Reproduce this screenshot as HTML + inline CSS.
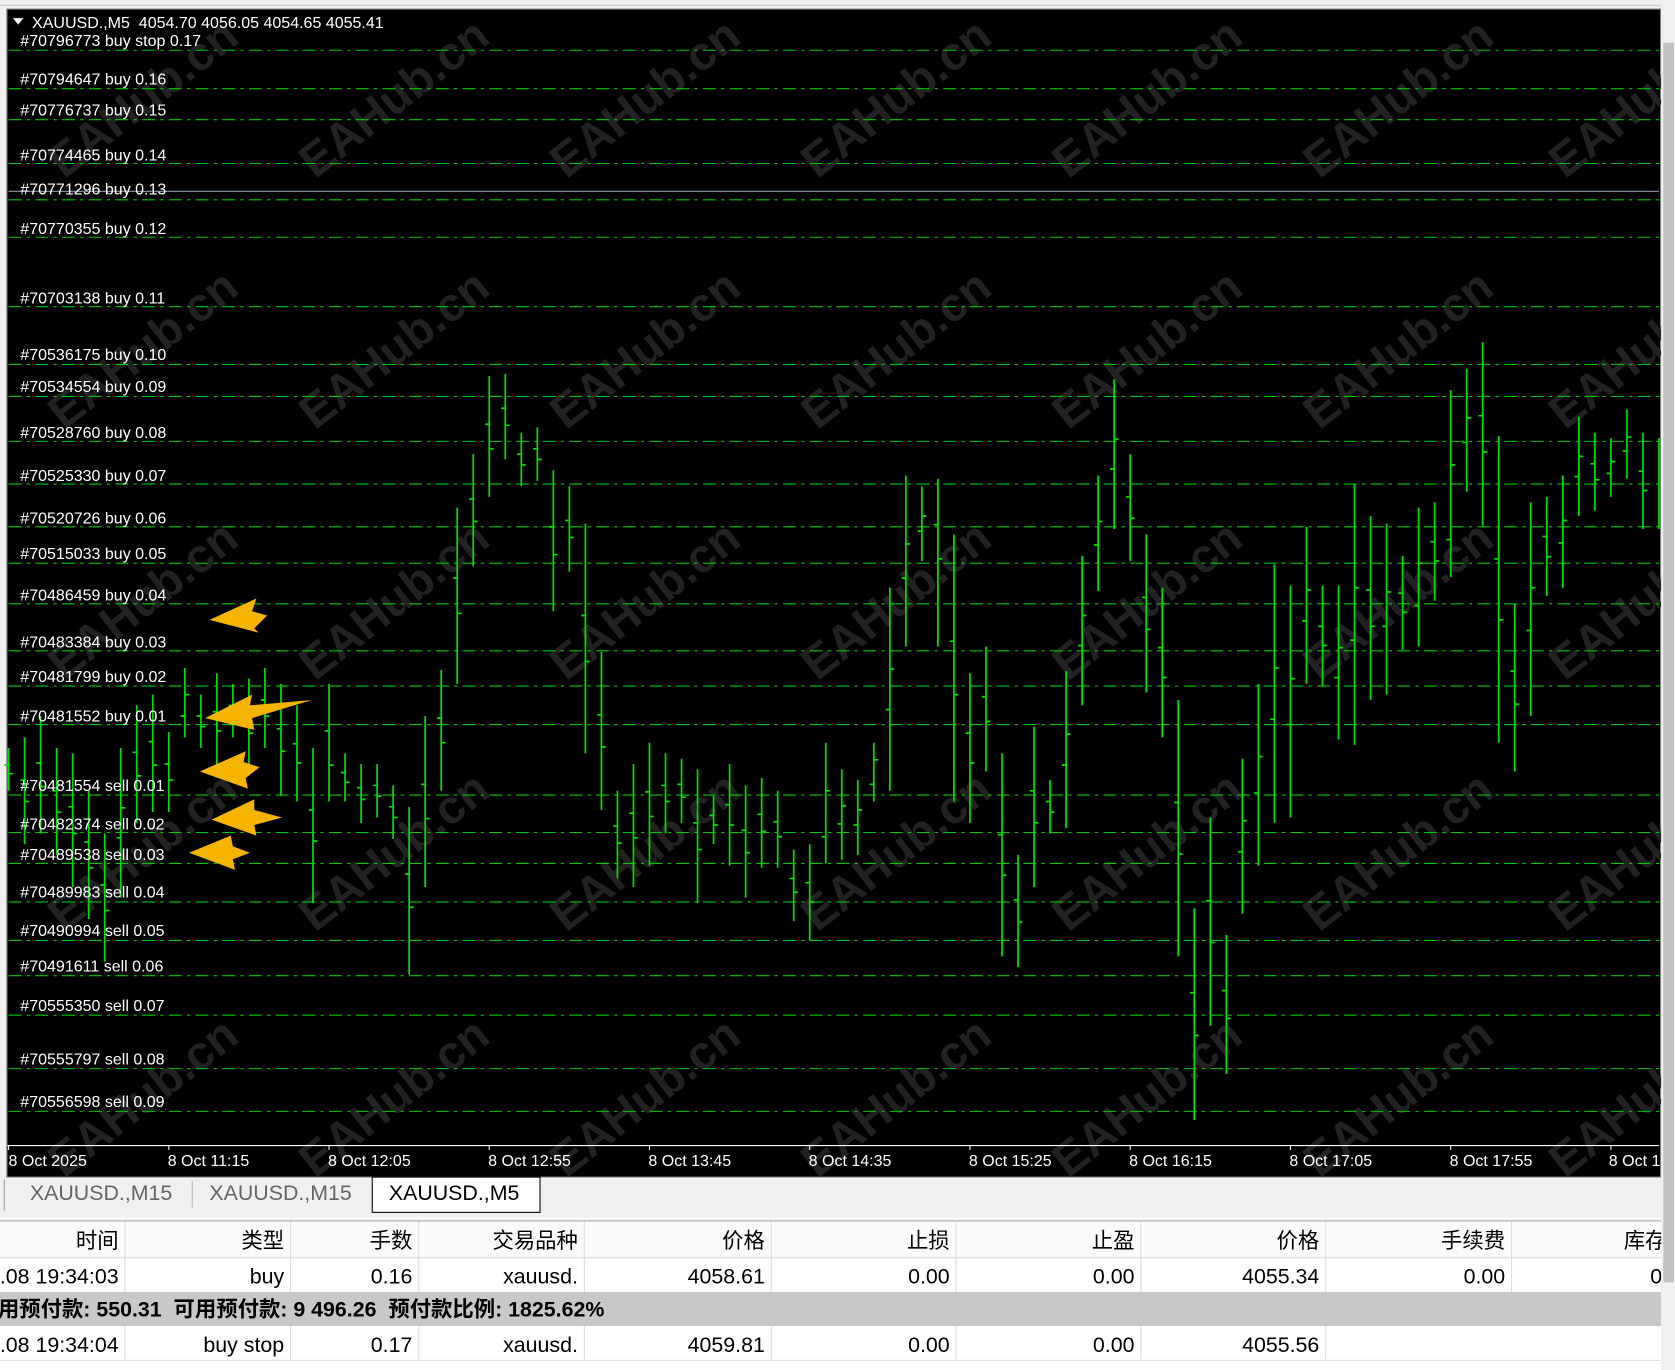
<!DOCTYPE html>
<html><head><meta charset="utf-8"><style>
html,body{margin:0;padding:0;background:#f0f0f0;width:1675px;height:1370px;overflow:hidden}
svg{display:block}
.l{font-family:"Liberation Sans",sans-serif;font-size:15px;fill:#fff}
.a{font-family:"Liberation Sans",sans-serif;font-size:15px;fill:#fff}
.t{font-family:"Liberation Sans","Noto Sans CJK SC",sans-serif;font-size:20px;fill:#000}
.wm{font-family:"Liberation Sans",sans-serif;font-size:44px;font-weight:bold;fill:#222}
</style></head><body>
<svg width="1675" height="1370" viewBox="0 0 1568 1282" preserveAspectRatio="none" xmlns="http://www.w3.org/2000/svg">
<rect x="0" y="0" width="1568" height="1282" fill="#f0f0f0"/>
<line x1="0" y1="5" x2="1555" y2="5" stroke="#c8c8c8"/>
<rect x="6" y="8" width="1549" height="1094" fill="#000"/>
<rect x="6.5" y="8.5" width="1548" height="1093" fill="none" stroke="#888"/>
<!-- watermarks -->
<g transform="translate(0,8)">
<text class="wm" transform="translate(60,160) rotate(-38)">EAHub.cn</text>
<text class="wm" transform="translate(295,160) rotate(-38)">EAHub.cn</text>
<text class="wm" transform="translate(530,160) rotate(-38)">EAHub.cn</text>
<text class="wm" transform="translate(765,160) rotate(-38)">EAHub.cn</text>
<text class="wm" transform="translate(1000,160) rotate(-38)">EAHub.cn</text>
<text class="wm" transform="translate(1235,160) rotate(-38)">EAHub.cn</text>
<text class="wm" transform="translate(1465,160) rotate(-38)">EAHub.cn</text>
<text class="wm" transform="translate(60,395) rotate(-38)">EAHub.cn</text>
<text class="wm" transform="translate(295,395) rotate(-38)">EAHub.cn</text>
<text class="wm" transform="translate(530,395) rotate(-38)">EAHub.cn</text>
<text class="wm" transform="translate(765,395) rotate(-38)">EAHub.cn</text>
<text class="wm" transform="translate(1000,395) rotate(-38)">EAHub.cn</text>
<text class="wm" transform="translate(1235,395) rotate(-38)">EAHub.cn</text>
<text class="wm" transform="translate(1465,395) rotate(-38)">EAHub.cn</text>
<text class="wm" transform="translate(60,630) rotate(-38)">EAHub.cn</text>
<text class="wm" transform="translate(295,630) rotate(-38)">EAHub.cn</text>
<text class="wm" transform="translate(530,630) rotate(-38)">EAHub.cn</text>
<text class="wm" transform="translate(765,630) rotate(-38)">EAHub.cn</text>
<text class="wm" transform="translate(1000,630) rotate(-38)">EAHub.cn</text>
<text class="wm" transform="translate(1235,630) rotate(-38)">EAHub.cn</text>
<text class="wm" transform="translate(1465,630) rotate(-38)">EAHub.cn</text>
<text class="wm" transform="translate(60,865) rotate(-38)">EAHub.cn</text>
<text class="wm" transform="translate(295,865) rotate(-38)">EAHub.cn</text>
<text class="wm" transform="translate(530,865) rotate(-38)">EAHub.cn</text>
<text class="wm" transform="translate(765,865) rotate(-38)">EAHub.cn</text>
<text class="wm" transform="translate(1000,865) rotate(-38)">EAHub.cn</text>
<text class="wm" transform="translate(1235,865) rotate(-38)">EAHub.cn</text>
<text class="wm" transform="translate(1465,865) rotate(-38)">EAHub.cn</text>
<text class="wm" transform="translate(60,1095) rotate(-38)">EAHub.cn</text>
<text class="wm" transform="translate(295,1095) rotate(-38)">EAHub.cn</text>
<text class="wm" transform="translate(530,1095) rotate(-38)">EAHub.cn</text>
<text class="wm" transform="translate(765,1095) rotate(-38)">EAHub.cn</text>
<text class="wm" transform="translate(1000,1095) rotate(-38)">EAHub.cn</text>
<text class="wm" transform="translate(1235,1095) rotate(-38)">EAHub.cn</text>
<text class="wm" transform="translate(1465,1095) rotate(-38)">EAHub.cn</text>
</g>
<!-- order lines -->
<g stroke="#00c800" stroke-width="1" stroke-dasharray="12 5 3 5" fill="none">
<path d="M8 47H1553M8 83H1553M8 112H1553M8 153H1553M8 187H1553M8 222H1553M8 287H1553M8 341H1553M8 371H1553M8 413H1553M8 453H1553M8 493H1553M8 527H1553M8 565H1553M8 609H1553M8 642H1553M8 678H1553M8 744H1553M8 779H1553M8 808H1553M8 844H1553M8 880H1553M8 913H1553M8 950H1553M8 1000H1553M8 1040H1553"/>
</g>
<line x1="8" y1="179" x2="1553" y2="179" stroke="#8a98a8"/>
<!-- bars -->
<path stroke="#00e000" stroke-width="1.6" fill="none" d="
M8 700V740M4 716H8M8 724H12
M23 690V790M19 730H23M23 750H27
M38 670V780M34 714H38M38 736H42
M53 700V800M49 740H53M53 760H57
M68 705V830M64 755H68M68 780H72
M83 740V860M79 788H83M83 812H87
M98 780V900M94 828H98M98 852H102
M113 700V840M109 784H113M113 756H117
M128 660V770M124 704H128M128 726H132
M143 650V760M139 694H143M143 716H147
M158 685V760M154 715H158M158 730H162
M173 625V690M169 670H173M173 650H177
M188 650V700M184 670H188M188 680H192
M203 630V720M199 666H203M203 684H207
M218 640V690M214 660H218M218 670H222
M233 635V720M229 669H233M233 686H237
M248 625V700M244 655H248M248 670H252
M263 640V745M259 682H263M263 703H267
M278 660V750M274 696H278M278 714H282
M293 700V845M289 758H293M293 787H297
M308 640V750M304 684H308M308 716H312
M323 705V750M319 723H323M323 732H327
M338 715V770M334 737H338M338 748H342
M353 715V765M349 735H353M353 745H357
M368 735V785M364 755H368M368 765H372
M383 755V912M379 818H383M383 849H387
M398 670V830M394 734H398M398 766H402
M413 627V740M409 672H413M413 695H417
M428 475V640M424 541H428M428 574H432
M443 425V530M439 467H443M443 488H447
M458 352V465M454 397H458M458 420H462
M473 350V430M469 382H473M473 398H477
M488 405V455M484 425H488M488 435H492
M503 400V450M499 420H503M503 430H507
M518 440V572M514 493H518M518 519H522
M533 455V535M529 487H533M533 503H537
M548 490V705M544 576H548M548 619H552
M563 610V758M559 669H563M563 699H567
M578 740V822M574 773H578M578 789H582
M593 715V830M589 761H593M593 784H597
M608 695V810M604 741H608M608 764H612
M623 705V780M619 735H623M623 750H627
M638 710V770M634 734H638M638 746H642
M653 720V845M649 770H653M653 795H657
M668 745V790M664 763H668M668 772H672
M683 715V810M679 753H683M683 772H687
M698 735V840M694 777H698M698 798H702
M713 728V812M709 762H713M713 778H717
M728 740V812M724 769H728M728 783H732
M743 795V862M739 822H743M743 835H747
M758 790V880M754 826H758M758 844H762
M773 695V808M769 783H773M773 740H777
M788 720V805M784 771H788M788 754H792
M803 730V800M799 772H803M803 758H807
M818 695V750M814 734H818M818 711H822
M833 550V740M829 664H833M833 626H837
M848 445V605M844 541H848M848 509H852
M863 455V525M859 497H863M863 483H867
M878 448V605M874 491H878M878 523H882
M893 500V750M889 600H893M893 650H897
M908 630V770M904 686H908M908 714H912
M923 605V722M919 652H923M923 675H927
M938 705V895M934 781H938M938 819H942
M953 800V905M949 842H953M953 863H957
M968 680V830M964 740H968M968 770H972
M983 730V780M979 750H983M983 760H987
M998 628V775M994 716H998M998 687H1002
M1013 520V660M1009 604H1013M1013 576H1017
M1028 445V553M1024 510H1028M1028 488H1032
M1043 355V495M1039 439H1043M1043 411H1047
M1058 425V525M1054 465H1058M1058 485H1062
M1073 500V648M1069 559H1073M1073 589H1077
M1088 550V690M1084 606H1088M1088 634H1092
M1103 655V895M1099 751H1103M1103 799H1107
M1118 850V1048M1114 929H1118M1118 969H1122
M1133 765V960M1129 843H1133M1133 882H1137
M1148 875V1005M1144 927H1148M1148 953H1152
M1163 710V855M1159 797H1163M1163 768H1167
M1178 640V810M1174 742H1178M1178 708H1182
M1193 528V770M1189 673H1193M1193 625H1197
M1208 548V765M1204 678H1208M1208 635H1212
M1223 493V640M1219 581H1223M1223 552H1227
M1238 548V642M1234 586H1238M1238 604H1242
M1253 548V692M1249 634H1253M1253 606H1257
M1268 453V697M1264 599H1268M1268 550H1272
M1283 483V655M1279 552H1283M1283 586H1287
M1298 490V650M1294 586H1298M1298 554H1302
M1313 520V608M1309 555H1313M1313 573H1317
M1328 475V605M1324 567H1328M1328 527H1332
M1343 470V562M1339 507H1343M1343 525H1347
M1358 365V540M1354 505H1358M1358 435H1362
M1373 345V460M1369 414H1373M1373 391H1377
M1388 320V492M1384 389H1388M1388 423H1392
M1403 408V695M1399 523H1403M1403 580H1407
M1418 565V722M1414 628H1418M1418 659H1422
M1433 470V670M1429 590H1433M1433 550H1437
M1448 465V558M1444 502H1448M1448 521H1452
M1463 445V550M1459 508H1463M1463 487H1467
M1478 390V483M1474 446H1478M1478 427H1482
M1493 405V478M1489 434H1493M1493 449H1497
M1508 410V465M1504 443H1508M1508 432H1512
M1523 383V448M1519 422H1523M1523 409H1527
M1538 405V495M1534 441H1538M1538 459H1542
M1553 410V495"/>
<!-- labels -->
<g class="l" transform="translate(0,-5)">
<text x="19" y="48">#70796773 buy stop 0.17</text>
<text x="19" y="84">#70794647 buy 0.16</text>
<text x="19" y="113">#70776737 buy 0.15</text>
<text x="19" y="155">#70774465 buy 0.14</text>
<text x="19" y="187">#70771296 buy 0.13</text>
<text x="19" y="224">#70770355 buy 0.12</text>
<text x="19" y="289">#70703138 buy 0.11</text>
<text x="19" y="342">#70536175 buy 0.10</text>
<text x="19" y="372">#70534554 buy 0.09</text>
<text x="19" y="415">#70528760 buy 0.08</text>
<text x="19" y="455">#70525330 buy 0.07</text>
<text x="19" y="495">#70520726 buy 0.06</text>
<text x="19" y="528">#70515033 buy 0.05</text>
<text x="19" y="567">#70486459 buy 0.04</text>
<text x="19" y="611">#70483384 buy 0.03</text>
<text x="19" y="643">#70481799 buy 0.02</text>
<text x="19" y="680">#70481552 buy 0.01</text>
<text x="19" y="745">#70481554 sell 0.01</text>
<text x="19" y="781">#70482374 sell 0.02</text>
<text x="19" y="810">#70489538 sell 0.03</text>
<text x="19" y="845">#70489983 sell 0.04</text>
<text x="19" y="881">#70490994 sell 0.05</text>
<text x="19" y="914">#70491611 sell 0.06</text>
<text x="19" y="951">#70555350 sell 0.07</text>
<text x="19" y="1001">#70555797 sell 0.08</text>
<text x="19" y="1041">#70556598 sell 0.09</text>
</g>
<path d="M12 17h10l-5 6z" fill="#fff"/>
<text class="l" x="30" y="26" xml:space="preserve">XAUUSD.,M5  4054.70 4056.05 4054.65 4055.41</text>
<!-- arrows -->
<g fill="#f5b400">
<path d="M196 580L240 560L236 572L250 576L238 588L242 592Z"/>
<path d="M192 672L236 650L234 660L292 655L236 672L238 683Z"/>
<path d="M187 722L230 703L228 713L243 718L230 728L232 738Z"/>
<path d="M198 767L238 748L238 758L264 765L238 772L240 782Z"/>
<path d="M177 798L216 782L218 792L234 798L218 804L220 814Z"/>
</g>
<!-- axis -->
<line x1="7" y1="1072" x2="1553" y2="1072" stroke="#fff"/>
<g stroke="#fff"><path d="M8 1072v4M158 1072v4M308 1072v4M458 1072v4M608 1072v4M758 1072v4M908 1072v4M1058 1072v4M1208 1072v4M1358 1072v4M1508 1072v4"/></g>
<g class="a">
<text x="8" y="1091">8 Oct 2025</text>
<text x="157" y="1091">8 Oct 11:15</text>
<text x="307" y="1091">8 Oct 12:05</text>
<text x="457" y="1091">8 Oct 12:55</text>
<text x="607" y="1091">8 Oct 13:45</text>
<text x="757" y="1091">8 Oct 14:35</text>
<text x="907" y="1091">8 Oct 15:25</text>
<text x="1057" y="1091">8 Oct 16:15</text>
<text x="1207" y="1091">8 Oct 17:05</text>
<text x="1357" y="1091">8 Oct 17:55</text>
<text x="1506" y="1091">8 Oct 1</text>
</g>
<!-- tabs -->
<rect x="0" y="1102" width="1555" height="38" fill="#f0f0f0"/>
<line x1="4" y1="1104" x2="4" y2="1133" stroke="#999"/>
<line x1="180" y1="1105" x2="180" y2="1130" stroke="#bbb"/>
<rect x="348.5" y="1101.5" width="157" height="33" fill="#fff" stroke="#000"/>
<text class="t" x="28" y="1123" style="fill:#666">XAUUSD.,M15</text>
<text class="t" x="196" y="1123" style="fill:#666">XAUUSD.,M15</text>
<text class="t" x="364" y="1123">XAUUSD.,M5</text>
<line x1="0" y1="1140" x2="1555" y2="1140" stroke="#fff"/>
<!-- table -->
<rect x="0" y="1143" width="1555" height="34" fill="#fafafa"/>
<line x1="0" y1="1142.5" x2="1555" y2="1142.5" stroke="#b0b0b0"/>
<rect x="0" y="1177" width="1555" height="32" fill="#fff"/>
<rect x="0" y="1209" width="1555" height="32" fill="#c8c8c8"/>
<rect x="0" y="1241" width="1555" height="41" fill="#fff"/>
<g stroke="#dcdcdc">
<line x1="0" y1="1177" x2="1555" y2="1177"/>
<line x1="0" y1="1273" x2="1555" y2="1273"/>
<path d="M117 1143v66M272 1143v66M392 1143v66M547 1143v66M722 1143v66M895 1143v66M1068 1143v66M1241 1143v66M1415 1143v66"/>
<path d="M117 1241v32M272 1241v32M392 1241v32M547 1241v32M722 1241v32M895 1241v32M1068 1241v32M1241 1241v32"/>
</g>
<g class="t" text-anchor="end">
<text x="111" y="1168">时间</text><text x="266" y="1168">类型</text><text x="386" y="1168">手数</text><text x="541" y="1168">交易品种</text><text x="716" y="1168">价格</text><text x="889" y="1168">止损</text><text x="1062" y="1168">止盈</text><text x="1235" y="1168">价格</text><text x="1409" y="1168">手续费</text><text x="1560" y="1168">库存</text>
<text x="111" y="1201">.08 19:34:03</text><text x="266" y="1201">buy</text><text x="386" y="1201">0.16</text><text x="541" y="1201">xauusd.</text><text x="716" y="1201">4058.61</text><text x="889" y="1201">0.00</text><text x="1062" y="1201">0.00</text><text x="1235" y="1201">4055.34</text><text x="1409" y="1201">0.00</text><text x="1556" y="1201">0</text>
<text x="111" y="1265">.08 19:34:04</text><text x="266" y="1265">buy stop</text><text x="386" y="1265">0.17</text><text x="541" y="1265">xauusd.</text><text x="716" y="1265">4059.81</text><text x="889" y="1265">0.00</text><text x="1062" y="1265">0.00</text><text x="1235" y="1265">4055.56</text>
</g>
<text class="t" x="-2" y="1232" style="font-weight:bold" xml:space="preserve">用预付款: 550.31  可用预付款: 9 496.26  预付款比例: 1825.62%</text>
<!-- scrollbar -->
<rect x="1555" y="0" width="13" height="1282" fill="#f0f0f0"/>
<rect x="1557" y="40" width="10" height="1160" fill="#c2c2c2"/>
</svg>
</body></html>
